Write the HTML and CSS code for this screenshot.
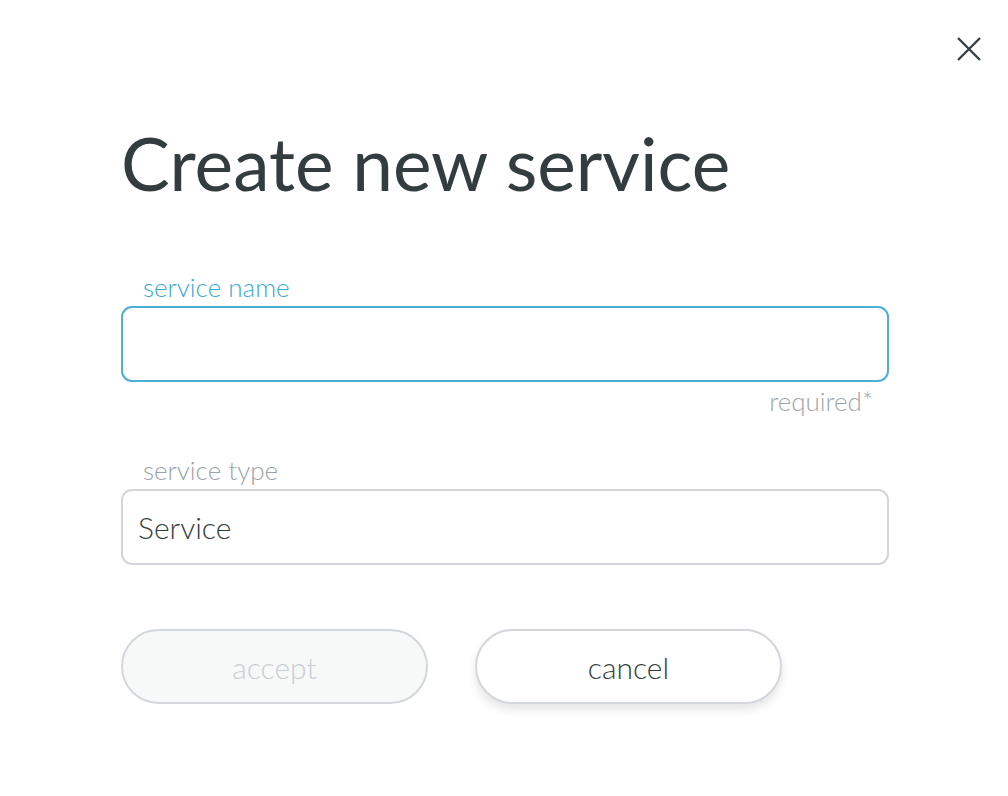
FILE: index.html
```html
<!DOCTYPE html>
<html>
<head>
<meta charset="utf-8">
<link rel="stylesheet" href="styles.css">
</head>
<body>
<div class="dialog">
  <button class="close" aria-label="close">
    <svg width="26" height="26" viewBox="0 0 26 26"><path d="M2 2 L24 24 M24 2 L2 24" stroke="#374145" stroke-width="2.4" fill="none"/></svg>
  </button>
  <div class="content">
    <h1 class="title">Create new service</h1>
    <div class="field">
      <label class="label label-active">service name</label>
      <div class="input input-active"></div>
      <div class="hint">required*</div>
    </div>
    <div class="field field-type">
      <label class="label">service type</label>
      <div class="input"><span class="value">Service</span></div>
    </div>
    <div class="actions">
      <button class="btn btn-disabled">accept</button>
      <button class="btn btn-cancel">cancel</button>
    </div>
  </div>
</div>
</body>
</html>
```
FILE: styles.css
```css
html, body {
  margin: 0;
  padding: 0;
  background: #ffffff;
}
body {
  font-family: Lato, "Open Sans", sans-serif;
  color: #333d40;
}
.dialog {
  position: relative;
  width: 1008px;
  height: 796px;
}
.close {
  position: absolute;
  left: 956px;
  top: 36px;
  width: 26px;
  height: 26px;
  padding: 0;
  border: 0;
  background: none;
  display: flex;
}
.content {
  padding: 119px 0 0 121px;
  width: 768px;
}
.title {
  margin: 0;
  font-weight: 400;
  font-size: 73px;
  line-height: 88px;
  color: #333d40;
}
.field {
  display: flex;
  flex-direction: column;
  margin-top: 66px;
}
.field-type {
  margin-top: 41px;
}
.label {
  font-size: 26px;
  font-weight: 300;
  line-height: 28px;
  padding-left: 22px;
  color: #9aa3a9;
  margin-bottom: 5px;
}
.label-active {
  color: #3aaad4;
}
.input {
  box-sizing: border-box;
  height: 76px;
  border: 2px solid #d2d6da;
  border-radius: 11px;
  display: flex;
  align-items: center;
  padding-left: 15px;
}
.input-active {
  border-color: #4ab0d8;
}
.value {
  font-size: 30px;
  font-weight: 300;
  color: #333d40;
}
.hint {
  align-self: flex-end;
  margin-right: 16px;
  margin-top: 5px;
  font-size: 26px;
  font-weight: 300;
  line-height: 28px;
  color: #9ea6ac;
}
.actions {
  display: flex;
  gap: 47px;
  margin-top: 64px;
}
.btn {
  box-sizing: border-box;
  width: 307px;
  height: 75px;
  border-radius: 38px;
  border: 2px solid #d3d7dc;
  background: #ffffff;
  font-family: Lato, "Open Sans", sans-serif;
  font-size: 30px;
  font-weight: 300;
  color: #333d40;
  padding: 0;
}
.btn-disabled {
  background: #f7f8f8;
  color: #c9ced2;
}
.btn-cancel {
  box-shadow: 0 6px 10px rgba(0, 0, 0, 0.10);
}
```
